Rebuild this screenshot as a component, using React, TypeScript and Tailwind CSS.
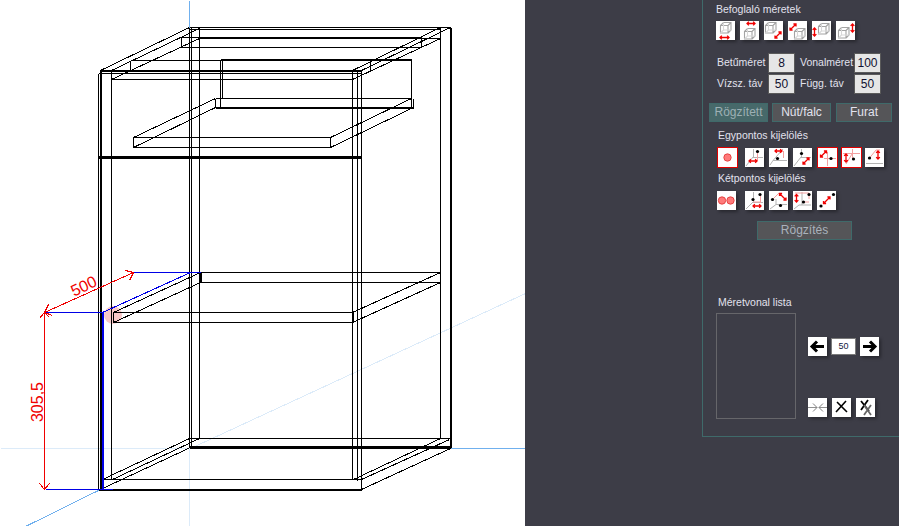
import type { ReactNode } from "react";

type Seg = [number, number, number, number, number?];

// wireframe of the cabinet: x1, y1, x2, y2, width
const black: Seg[] = [
  // back top
  [189, 27, 450, 27],
  [189, 29, 440, 29],
  [181, 37, 421, 37],
  [199, 38, 440, 38],
  [181, 47, 421, 47],
  [181, 37, 181, 47],
  [421, 37, 421, 47],
  [100, 70, 189, 27],
  [111, 70, 199, 28],
  [111, 79, 199, 38],
  [352, 70, 440, 27],
  [361, 70, 450, 27],
  [352, 79, 440, 38],
  // front top
  [100, 70, 361, 70, 2],
  [98, 73, 361, 73],
  [111, 79, 352, 79],
  [98, 157, 360, 157, 3],
  // verticals
  [98, 73, 98, 489],
  [100, 70, 100, 489, 2],
  [111, 70, 111, 479],
  [352, 70, 352, 479],
  [357, 70, 357, 480],
  [361, 70, 361, 489],
  [189, 27, 189, 447],
  [191, 27, 191, 447],
  [199, 27, 199, 438],
  [440, 27, 440, 438],
  [450, 27, 450, 447, 2],
  // drawer back
  [220, 59, 411, 59, 2],
  [220, 59, 220, 107],
  [222, 59, 222, 98],
  [411, 59, 411, 107],
  [413, 98, 413, 107],
  [215, 98, 411, 98],
  [215, 107, 413, 107, 2],
  [215, 98, 215, 107],
  [130, 60, 220, 60],
  [130, 60, 130, 70],
  [370, 60, 370, 70],
  // drawer shelf
  [133, 137, 330, 137],
  [133, 147, 330, 147],
  [133, 137, 133, 147],
  [330, 137, 330, 147],
  [133, 137, 215, 98],
  [133, 147, 215, 107],
  [330, 137, 411, 98],
  [330, 147, 413, 107],
  // middle shelf
  [200, 272, 440, 272],
  [200, 282, 440, 282],
  [113, 312, 352, 312],
  [113, 322, 352, 322],
  [113, 312, 113, 322],
  [352, 312, 352, 322, 2],
  [200, 272, 200, 282, 2],
  [113, 312, 200, 272],
  [113, 322, 200, 282],
  [352, 312, 440, 272],
  [352, 322, 440, 282],
  // bottom
  [189, 438, 450, 438],
  [189, 447, 450, 447, 3],
  [101, 479, 361, 479],
  [98, 489, 361, 489, 2],
  [100, 489, 190, 447],
  [102, 479, 189, 438],
  [112, 479, 199, 438],
  [353, 479, 440, 438],
  [361, 479, 449, 439],
  [361, 489, 450, 448],
];

const blue: Seg[] = [
  [44, 312, 103, 312],
  [102, 312, 190, 272],
  [132, 272, 200, 272],
  [102, 312, 102, 489, 2],
  [45, 489, 112, 489],
];

const red: Seg[] = [
  [44, 312, 44, 489],
  [44, 312, 133, 272],
  [39, 318, 44, 312],
  [44, 312, 49, 317],
  [44, 312, 52, 315],
  [44, 312, 48, 304],
  [125, 270, 133, 272],
  [129, 280, 133, 272],
  [39, 483, 44, 489],
  [49, 483, 44, 489],
];

function Lines({ segs, color }: { segs: Seg[]; color: string }) {
  return (
    <g stroke={color} shapeRendering="crispEdges">
      {segs.map(([x1, y1, x2, y2, w], i) => (
        <line key={i} x1={x1 + 0.5} y1={y1 + 0.5} x2={x2 + 0.5} y2={y2 + 0.5} strokeWidth={w ?? 1} />
      ))}
    </g>
  );
}

function Viewport() {
  return (
    <svg width="525" height="526" viewBox="0 0 525 526" className="block shrink-0 bg-white">
      <Lines
        color="#dcebf9"
        segs={[
          [0, 448, 190, 448],
          [189, 447, 189, 526],
          [190, 448, 525, 293],
        ]}
      />
      <Lines
        color="#70b0ee"
        segs={[
          [450, 448, 525, 448],
          [189, 0, 189, 27],
          [100, 489, 25, 526],
        ]}
      />
      <circle cx="113" cy="315" r="9" fill="#f9c8c8" />
      <Lines segs={black} color="#000" />
      <Lines segs={blue} color="#0000e6" />
      <Lines segs={red} color="#f00000" />
      <text
        x="86"
        y="291"
        fill="#f00000"
        fontSize="16"
        textAnchor="middle"
        fontFamily="'Liberation Sans', sans-serif"
        transform="rotate(-25 86 291)"
      >
        500
      </text>
      <text
        x="43"
        y="402"
        fill="#f00000"
        fontSize="16"
        textAnchor="middle"
        fontFamily="'Liberation Sans', sans-serif"
        transform="rotate(-90 43 402)"
      >
        305,5
      </text>
    </svg>
  );
}

function Tile({ children, className = "" }: { children: ReactNode; className?: string }) {
  return (
    <div className={`w-[19px] h-[19px] shrink-0 bg-white shadow-[2px_2px_3px_rgba(0,0,0,0.35)] ${className}`}>
      <svg width="19" height="19" viewBox="0 0 19 19" className="block">
        {children}
      </svg>
    </div>
  );
}

function Boxed({ children, className = "" }: { children: ReactNode; className?: string }) {
  return (
    <div className={`w-[21px] h-[21px] shrink-0 bg-white border border-[#e00000] ${className}`}>
      <svg width="19" height="19" viewBox="0 0 19 19" className="block">
        {children}
      </svg>
    </div>
  );
}

function Cube({ x, y }: { x: number; y: number }) {
  return (
    <g transform={`translate(${x} ${y})`} fill="none" stroke="#a4a4a4" strokeWidth="1.1">
      <path d="M0.5 3.5h7.5v7.5h-7.5zM0.5 3.5l3-3h7.5v7.5l-3 3M8 3.5l3-3" />
      <path d="M3.5 0.5v7.5h7.5M3.5 8l-3 3" stroke="#d8d8d8" />
    </g>
  );
}

function RedArrow({ x1, y1, x2, y2 }: { x1: number; y1: number; x2: number; y2: number }) {
  const a = Math.atan2(y2 - y1, x2 - x1);
  const h = 2.6;
  const head = (px: number, py: number, d: number) => {
    const l = a + d + Math.PI * 0.75;
    const r = a + d - Math.PI * 0.75;
    return `M${px + Math.cos(l) * h} ${py + Math.sin(l) * h}L${px} ${py}L${px + Math.cos(r) * h} ${py + Math.sin(r) * h}`;
  };
  return (
    <path
      d={`M${x1} ${y1}L${x2} ${y2}${head(x2, y2, 0)}${head(x1, y1, Math.PI)}`}
      fill="none"
      stroke="#f00000"
      strokeWidth="1.3"
    />
  );
}

function Axes({ x, y }: { x: number; y: number }) {
  return (
    <path d={`M${x + 0.5} 1V${y}M${x} ${y + 0.5}H18M${x} ${y}L1 18`} fill="none" stroke="#b4b4b4" />
  );
}

function Dot({ x, y }: { x: number; y: number }) {
  return <circle cx={x} cy={y} r="1.6" fill="#000" />;
}

function BigDot({ x }: { x: number }) {
  return <circle cx={x} cy="9.5" r="3.7" fill="#ff7a7a" stroke="#e03030" strokeWidth="0.8" />;
}

function Field({ value }: { value: string }) {
  return (
    <div className="w-[27px] h-[20px] shrink-0 bg-[#e6e6e6] border border-[#5a5a5a] text-[#101030] text-[12px] leading-[18px] text-center">
      {value}
    </div>
  );
}

function ActionButton({ children, className }: { children: ReactNode; className: string }) {
  return (
    <div className={`h-[19px] shrink-0 border border-[#3f6a6a] text-[12px] leading-[17px] text-center ${className}`}>
      {children}
    </div>
  );
}

export default function App() {
  return (
    <div className="flex w-[899px] h-[526px] overflow-hidden bg-[#3d3d47] font-['Liberation_Sans',sans-serif] text-[10.5px] text-[#e2e2ee]">
      <Viewport />

      <div className="ml-[177px] w-[197px] h-[437px] shrink-0 border-l border-b border-[#3f6a6a] pl-[6px]">
        <div className="ml-[7px] mt-[3px] h-[13px] leading-[13px]">Befoglaló méretek</div>
        <div className="ml-[7px] mt-[5px] flex gap-[5px]">
          <Tile>
            <Cube x={4} y={1} />
            <RedArrow x1={4} y1={16.5} x2={13} y2={16.5} />
          </Tile>
          <Tile>
            <Cube x={4} y={7} />
            <RedArrow x1={7} y1={2.5} x2={15} y2={2.5} />
          </Tile>
          <Tile>
            <Cube x={1} y={1} />
            <RedArrow x1={11} y1={17} x2={17} y2={11} />
          </Tile>
          <Tile>
            <Cube x={6} y={7} />
            <RedArrow x1={2} y1={9} x2={8} y2={3} />
          </Tile>
          <Tile>
            <Cube x={6} y={2} />
            <RedArrow x1={2.5} y1={7} x2={2.5} y2={15} />
          </Tile>
          <Tile>
            <Cube x={2} y={6} />
            <RedArrow x1={16.5} y1={3} x2={16.5} y2={11} />
          </Tile>
        </div>

        <div className="ml-[8px] mt-[13px] flex h-[20px] items-center">
          <span className="w-[51px]">Betűméret</span>
          <Field value="8" />
          <span className="ml-[5px] w-[54px]">Vonalméret</span>
          <Field value="100" />
        </div>
        <div className="ml-[8px] mt-[1px] flex h-[20px] items-center">
          <span className="w-[51px]">Vízsz. táv</span>
          <Field value="50" />
          <span className="ml-[5px] w-[54px]">Függ. táv</span>
          <Field value="50" />
        </div>

        <div className="mt-[9px] flex gap-[4px]">
          <ActionButton className="w-[59px] bg-[#47696a] text-[#9db0b4]">Rögzített</ActionButton>
          <ActionButton className="w-[59px] bg-[#555558]">Nút/falc</ActionButton>
          <ActionButton className="ml-[1px] w-[56px] bg-[#555558]">Furat</ActionButton>
        </div>

        <div className="ml-[9px] mt-[7px] h-[13px] leading-[13px]">Egypontos kijelölés</div>
        <div className="ml-[8px] mt-[5px] flex h-[21px] items-center gap-[5px]">
          <Boxed className="mr-[2px]">
            <BigDot x={9.5} />
          </Boxed>
          <Tile>
            <Axes x={8} y={9} />
            <path d="M12.5 3V13" stroke="#f4a0a0" />
            <Dot x={12.5} y={3.5} />
            <RedArrow x1={4} y1={13} x2={12} y2={13} />
          </Tile>
          <Tile>
            <path d="M4 12.5H18M4 12.5L1 17M4 12.5L14 1" stroke="#b4b4b4" fill="none" />
            <path d="M14.5 3V10" stroke="#f4a0a0" />
            <Dot x={8.5} y={10.5} />
            <RedArrow x1={6} y1={3} x2={13} y2={3} />
          </Tile>
          <Tile>
            <Axes x={8} y={9} />
            <Dot x={8.5} y={5.5} />
            <RedArrow x1={10} y1={16} x2={16} y2={10} />
          </Tile>
          <Boxed>
            <path d="M6 10.5H18M9.5 4V18" stroke="#f4a0a0" />
            <Dot x={13} y={10.5} />
            <RedArrow x1={2.5} y1={9} x2={8.5} y2={3} />
          </Boxed>
          <Boxed className="-ml-[2px]">
            <path d="M1 5.5H18M10.5 1V11M4 16L10 6" stroke="#f4a0a0" fill="none" />
            <Dot x={11.5} y={11} />
            <RedArrow x1={4} y1={6} x2={4} y2={14} />
          </Boxed>
          <Tile className="-ml-[2px]">
            <path d="M1 15.5H18" stroke="#b4b4b4" />
            <path d="M4.5 10L11 2H15" stroke="#f4a0a0" fill="none" />
            <Dot x={4.5} y={10} />
            <RedArrow x1={13} y1={3} x2={13} y2={11} />
          </Tile>
        </div>

        <div className="ml-[9px] mt-[4px] h-[13px] leading-[13px]">Kétpontos kijelölés</div>
        <div className="ml-[8px] mt-[6px] flex gap-[5px]">
          <Tile className="mr-[4px]">
            <BigDot x={5} />
            <BigDot x={13.5} />
          </Tile>
          <Tile>
            <Axes x={8} y={11} />
            <path d="M15.5 3V12M8 11H15" stroke="#f4a0a0" />
            <Dot x={8} y={8.5} />
            <Dot x={15} y={3.5} />
            <RedArrow x1={8} y1={15} x2={16} y2={15} />
          </Tile>
          <Tile>
            <path d="M7 13.5H18M7 13.5L1 18M7 13.5V8" stroke="#b4b4b4" fill="none" />
            <path d="M3.5 8.5L10 2" stroke="#f4a0a0" />
            <Dot x={3.5} y={8.5} />
            <Dot x={11.5} y={14.5} />
            <RedArrow x1={10.5} y1={2.5} x2={17} y2={9} />
          </Tile>
          <Tile>
            <path d="M6 14H18M6 14L1 18M9 1V14" stroke="#b4b4b4" fill="none" />
            <path d="M2 2H16V8M9 11H16" stroke="#f4a0a0" fill="none" />
            <Dot x={16} y={3.5} />
            <Dot x={10.5} y={11} />
            <RedArrow x1={3.5} y1={3.5} x2={3.5} y2={11} />
          </Tile>
          <Tile>
            <RedArrow x1={6.5} y1={12.5} x2={13} y2={6} />
            <Dot x={4} y={15} />
            <Dot x={16.5} y={3.5} />
          </Tile>
        </div>

        <ActionButton className="ml-[48px] mt-[11px] w-[95px] bg-[#555558] text-[#aab2bc]">Rögzítés</ActionButton>

        <div className="ml-[9px] mt-[56px] h-[13px] leading-[13px]">Méretvonal lista</div>
        <div className="ml-[7px] mt-[4px] flex">
          <div className="w-[80px] h-[106px] border border-[#66666a]" />
          <div className="ml-[12px]">
            <div className="mt-[24px] flex items-center gap-[4px]">
              <Tile>
                <path d="M4 9.5H16M9 4.5L4 9.5L9 14.5" fill="none" stroke="#000" strokeWidth="3" />
              </Tile>
              <div className="w-[25px] h-[17px] bg-white border border-[#7a7a7a] text-[#102040] text-[9px] leading-[15px] text-center">
                50
              </div>
              <Tile>
                <path d="M3 9.5H15M10 4.5L15 9.5L10 14.5" fill="none" stroke="#000" strokeWidth="3" />
              </Tile>
            </div>
            <div className="mt-[42px] flex gap-[5px]">
              <Tile>
                <path d="M0 9.5H9M11 9.5H19" stroke="#909090" />
                <path d="M5 5.5L9 9.5L5 13.5M15 5.5L11 9.5L15 13.5" fill="none" stroke="#808080" />
              </Tile>
              <Tile>
                <path d="M5 4L15 14M14 3L4 14" stroke="#000" strokeWidth="1.6" fill="none" />
              </Tile>
              <Tile>
                <path d="M5 3L13 13M12 2L5 12" stroke="#000" strokeWidth="1.8" fill="none" />
                <path d="M8 7L15 17M15 7L8 17" stroke="#666" strokeWidth="1.8" fill="none" />
              </Tile>
            </div>
          </div>
        </div>
      </div>
    </div>
  );
}
